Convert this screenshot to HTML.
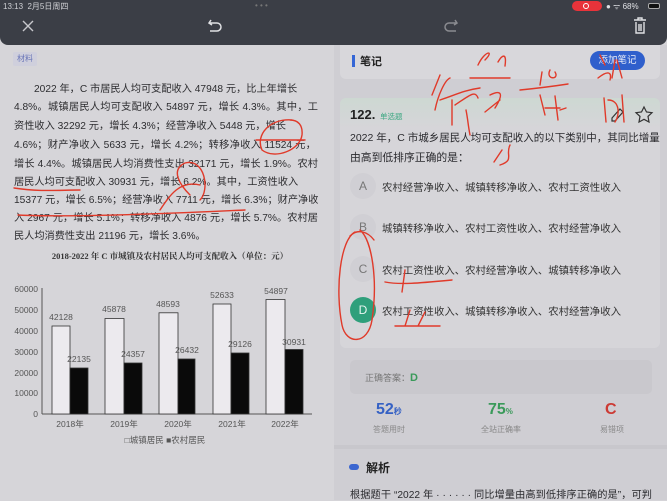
<!DOCTYPE html>
<html><head><meta charset="utf-8"><style>
*{margin:0;padding:0;box-sizing:border-box}
body{width:667px;height:500px;overflow:hidden;background:#d5d4d8;font-family:"Liberation Sans","Noto Sans CJK SC",sans-serif;position:relative;color:#2a2a2e}
.abs{position:absolute}
#top{left:0;top:0;width:667px;height:45px;background:#3b3e46;border-radius:0 0 8px 8px}
#left{left:0;top:45px;width:334px;height:455px;background:#d6d5d9}
#right{left:334px;top:45px;width:333px;height:455px;background:#cfced3}
.l{position:absolute;left:14px;width:304px;font-size:10.2px;white-space:nowrap;color:#2d2d30;text-align:justify;text-align-last:justify}
.card{background:#d8d7db}
.opt{left:350px;width:26px;height:26px;border-radius:13px;background:#d0cfd4;color:#777;font-size:12px;text-align:center;line-height:26px}
.ot{left:382px;font-size:10.4px;color:#333;white-space:nowrap}
</style></head><body>
<div id="left" class="abs"></div>
<div id="right" class="abs"></div>
<div id="top" class="abs"></div>
<div class="abs" style="left:3px;top:1px;font-size:8px;color:#cfd0d4">13:13 &nbsp;2月5日周四</div>
<div class="abs" style="left:255px;top:1px;font-size:8px;color:#777">• • •</div>
<div class="abs" style="left:572px;top:1px;width:30px;height:10px;border-radius:5px;background:#e8333a"></div>
<div class="abs" style="left:583px;top:3px;width:6px;height:6px;border-radius:3px;border:1px solid #fff"></div>
<div class="abs" style="left:606px;top:1px;font-size:8px;color:#dfe0e4">● ᯤ 68%</div>
<div class="abs" style="left:648px;top:3px;width:12px;height:6px;background:#111;border:1px solid #aaa;border-radius:2px"></div>
<svg class="abs" style="left:0;top:12px" width="667" height="32">
<path d="M23 9 L33 19 M33 9 L23 19" stroke="#c7c8cc" stroke-width="1.4" fill="none"/>
<path d="M211 8 L209 11 L212 13 M209 11 H217 A4 4 0 0 1 217 19 H210" stroke="#e0e1e4" stroke-width="1.5" fill="none"/>
<path d="M455 8 L457 11 L454 13 M457 11 H449 A4 4 0 0 0 449 19 H456" stroke="#8a8b90" stroke-width="1.5" fill="none"/>
<path d="M634 8 H646 M638 8 V6 H642 V8 M636 10 V21 H644 V10 M639 12 V19 M641 12 V19" stroke="#e0e1e4" stroke-width="1.4" fill="none"/>
</svg>
<!-- left -->
<div class="abs" style="left:13px;top:52px;width:24px;height:14px;background:#cfcfdc;color:#6a76b8;font-size:8px;line-height:14px;text-align:center;border-radius:2px">材料</div>
<div class="l" style="top:80px;left:34px;width:262px">2022 年，C 市居民人均可支配收入 47948 元，比上年增长</div>
<div class="l" style="top:98px">4.8%。城镇居民人均可支配收入 54897 元，增长 4.3%。其中，工</div>
<div class="l" style="top:117px;width:272px">资性收入 32292 元，增长 4.3%；经营净收入 5448 元，增长</div>
<div class="l" style="top:136px;width:302px">4.6%；财产净收入 5633 元，增长 4.2%；转移净收入 11524 元，</div>
<div class="l" style="top:155px">增长 4.4%。城镇居民人均消费性支出 32171 元，增长 1.9%。农村</div>
<div class="l" style="top:173px;width:284px">居民人均可支配收入 30931 元，增长 6.2%。其中，工资性收入</div>
<div class="l" style="top:191px">15377 元，增长 6.5%；经营净收入 7711 元，增长 6.3%；财产净收</div>
<div class="l" style="top:209px">入 2967 元，增长 5.1%；转移净收入 4876 元，增长 5.7%。农村居</div>
<div class="l" style="top:227px;width:182px">民人均消费性支出 21196 元，增长 3.6%。</div>
<div class="abs" style="left:30px;top:250px;width:280px;text-align:center;font-family:'Liberation Serif','Noto Serif CJK SC',serif;font-size:8.5px;font-weight:bold;color:#333;white-space:nowrap">2018-2022 年 C 市城镇及农村居民人均可支配收入（单位：元）</div>
<svg class="abs" style="left:0;top:280px" width="334" height="170" font-family="Liberation Sans" font-size="8.5" fill="#555">
<g text-anchor="end"><text x="38" y="12">60000</text><text x="38" y="33">50000</text><text x="38" y="54">40000</text><text x="38" y="75">30000</text><text x="38" y="96">20000</text><text x="38" y="116">10000</text><text x="38" y="137">0</text></g>
<line x1="42" y1="8" x2="42" y2="134" stroke="#555"/>
<line x1="42" y1="134" x2="312" y2="134" stroke="#555"/>
<g stroke="#333" stroke-width="0.8">
<rect x="52" y="46" width="18" height="88" fill="#eceaee"/><rect x="70" y="88" width="18" height="46" fill="#0a0a0a"/>
<rect x="105" y="38.5" width="19" height="95.5" fill="#eceaee"/><rect x="124" y="83" width="18" height="51" fill="#0a0a0a"/>
<rect x="159" y="32.8" width="19" height="101.2" fill="#eceaee"/><rect x="178" y="79" width="17" height="55" fill="#0a0a0a"/>
<rect x="213" y="24" width="18" height="110" fill="#eceaee"/><rect x="231" y="73" width="18" height="61" fill="#0a0a0a"/>
<rect x="266" y="19.5" width="19" height="114.5" fill="#eceaee"/><rect x="285" y="69.5" width="18" height="64.5" fill="#0a0a0a"/>
</g>
<g text-anchor="middle"><text x="61" y="40">42128</text><text x="79" y="82">22135</text>
<text x="114" y="32">45878</text><text x="133" y="77">24357</text>
<text x="168" y="27">48593</text><text x="187" y="73">26432</text>
<text x="222" y="18">52633</text><text x="240" y="67">29126</text>
<text x="276" y="14">54897</text><text x="294" y="65">30931</text>
<text x="70" y="147">2018年</text><text x="124" y="147">2019年</text><text x="178" y="147">2020年</text><text x="232" y="147">2021年</text><text x="285" y="147">2022年</text>
<text x="165" y="163">□城镇居民 ■农村居民</text></g>
</svg>
<!-- right -->
<div class="abs card" style="left:340px;top:45px;width:320px;height:34px;border-radius:0 0 6px 6px"></div>
<div class="abs" style="left:352px;top:55px;width:3px;height:12px;background:#3566d6"></div>
<div class="abs" style="left:360px;top:53px;font-size:11px;font-weight:bold;color:#222">笔记</div>
<div class="abs" style="left:590px;top:51px;width:55px;height:19px;border-radius:10px;background:#2f5fcc;color:#e8ecf7;font-size:9.5px;line-height:19px;text-align:center">添加笔记</div>
<div class="abs card" style="left:340px;top:98px;width:320px;height:250px;border-radius:6px;background:linear-gradient(#cdd8d2,#d6d5d9 30px)"></div>
<div class="abs" style="left:350px;top:107px;font-size:13px;font-weight:bold;color:#222">122.</div>
<div class="abs" style="left:380px;top:111px;font-size:7.5px;color:#3fa883">单选题</div>
<svg class="abs" style="left:610px;top:104px" width="50" height="20"><path d="M2 14 L10 5 L13 8 L5 17 H2Z" stroke="#333" fill="none" stroke-width="1.2"/><path d="M34 3 L36.5 8 L42 8.7 L38 12.4 L39 18 L34 15.3 L29 18 L30 12.4 L26 8.7 L31.5 8Z" stroke="#333" fill="none" stroke-width="1.2"/></svg>
<div class="abs" style="left:350px;top:130px;width:302px;font-size:10.5px;white-space:nowrap;color:#2a2a2e;text-align:justify;text-align-last:justify">2022 年，C 市城乡居民人均可支配收入的以下类别中，其同比增量</div>
<div class="abs" style="left:350px;top:149px;font-size:10.8px;white-space:nowrap;color:#2a2a2e">由高到低排序正确的是：</div>
<div class="abs opt" style="top:173px">A</div><div class="abs ot" style="top:179px">农村经营净收入、城镇转移净收入、农村工资性收入</div>
<div class="abs opt" style="top:214px">B</div><div class="abs ot" style="top:220px">城镇转移净收入、农村工资性收入、农村经营净收入</div>
<div class="abs opt" style="top:256px">C</div><div class="abs ot" style="top:262px">农村工资性收入、农村经营净收入、城镇转移净收入</div>
<div class="abs opt" style="top:297px;background:#2f9f7b;color:#e8f5f0">D</div><div class="abs ot" style="top:303px">农村工资性收入、城镇转移净收入、农村经营净收入</div>
<div class="abs" style="left:350px;top:360px;width:302px;height:34px;border-radius:5px;background:#c9c8cd"></div>
<div class="abs" style="left:365px;top:371px;font-size:9px;color:#777">正确答案：<b style="color:#3a9a5a;font-size:11px">D</b></div>
<div class="abs" style="left:376px;top:401px;font-size:16px;font-weight:bold;color:#3561c4">52<span style="font-size:8px">秒</span></div>
<div class="abs" style="left:373px;top:424px;font-size:8px;color:#888">答题用时</div>
<div class="abs" style="left:488px;top:401px;font-size:16px;font-weight:bold;color:#3a9a5a">75<span style="font-size:8px">%</span></div>
<div class="abs" style="left:481px;top:424px;font-size:8px;color:#888">全站正确率</div>
<div class="abs" style="left:605px;top:401px;font-size:16px;font-weight:bold;color:#cc3a34">C</div>
<div class="abs" style="left:600px;top:424px;font-size:8px;color:#888">易错项</div>
<div class="abs" style="left:334px;top:445px;width:333px;height:4px;background:#c8c7cc"></div>
<div class="abs" style="left:349px;top:464px;width:10px;height:6px;border-radius:3px;background:#3b66d0"></div>
<div class="abs" style="left:366px;top:459px;font-size:12px;font-weight:bold;color:#222">解析</div>
<div class="abs" style="left:350px;top:486px;width:302px;font-size:10.2px;white-space:nowrap;color:#2a2a2e;text-align:justify;text-align-last:justify">根据题干 “2022 年 · · · · · · 同比增量由高到低排序正确的是”，可判</div>
<!-- handwriting -->
<svg class="abs" style="left:0;top:0" width="667" height="500" fill="none" stroke="#e03a2a" stroke-width="1.4" stroke-linecap="round">
<path d="M292 120 C270 118 255 135 262 150 C275 160 300 150 302 135 C303 125 298 120 290 120 M256 140 H305"/>
<path d="M14 188 C40 192 60 190 80 190"/>
<path d="M18 215 C80 218 200 212 245 210 M190 195 C180 185 170 170 185 163 C205 158 210 190 200 200"/>
<path d="M160 210 C170 195 180 180 200 185"/>
<path d="M432 95 L440 75 M435 110 C438 95 445 80 450 78 M452 100 V125 M455 105 C470 95 475 90 478 98 M466 110 C468 120 468 125 470 135 M440 100 C455 95 465 90 480 88"/>
<path d="M478 65 C485 50 495 50 485 60 M498 62 C502 55 507 52 505 66 M470 78 H510 M490 95 C500 90 505 92 495 108 M485 112 L500 100"/>
<path d="M540 85 L542 72 M550 70 C545 80 560 80 555 72 M520 90 C540 88 555 86 568 84 M540 95 L545 115 M545 108 L560 108 M555 96 L558 120 M560 110 L566 108"/>
<path d="M600 55 L605 65 M598 78 C608 70 612 72 610 80 M615 60 L612 78 M617 60 L622 78 M604 98 L606 122 M608 100 C620 100 620 115 615 122 M622 95 L624 122"/>
<path d="M502 150 L494 162 M510 145 C505 155 515 160 500 165"/>
<path d="M355 232 C340 240 335 290 342 325 C346 345 368 345 372 320 C378 280 372 240 360 230 M350 236 C358 228 368 232 374 240"/>
<path d="M385 282 C400 285 420 283 452 280 M405 270 L402 292 M395 326 H440 M410 310 L405 326 M425 312 L418 326"/>
</svg>
</body></html>
